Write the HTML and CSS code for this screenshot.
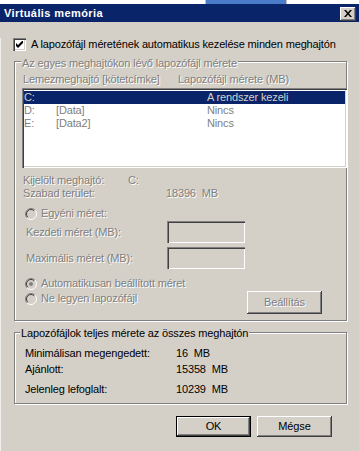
FILE: index.html
```html
<!DOCTYPE html>
<html lang="hu">
  <head>
    <meta charset="UTF-8" />
    <title>Virtuális memória</title>
    <link rel="stylesheet" href="styles.css">
  </head>
  <body>
    <div class="taskstrip"><span class="taskstrip-tab"></span></div>
    <div class="titlebar">
      <span class="title">Virtuális memória</span>
      <span class="close-btn">
        <svg width="8" height="7" viewBox="0 0 8 7">
          <path d="M0 0h2l2 2.5 2-2.5h2l-3 3.5 3 3.5h-2l-2-2.5-2 2.5h-2l3-3.5z" fill="#000" />
        </svg>
      </span>
    </div>

    <div class="dialog">
      <div class="check-row">
        <span class="checkbox">
          <svg width="7" height="7" viewBox="0 0 7 7">
            <path d="M0 2v3l2 2 5-5v-3l-5 5z" fill="#000" />
          </svg>
        </span>
        <span>A lapozófájl méretének automatikus kezelése minden meghajtón</span>
      </div>

      <div class="group group-drives">
        <div class="legend disabled">Az egyes meghajtókon lévő lapozófájl mérete</div>
        <div class="list-head disabled">
          <span class="col-drive">Lemezmeghajtó [kötetcímke]</span>
          <span>Lapozófájl mérete (MB)</span>
        </div>
        <div class="listbox">
          <div class="list-row selected">
            <span class="c1">C:</span><span class="c2"></span><span>A rendszer kezeli</span>
          </div>
          <div class="list-row">
            <span class="c1">D:</span><span class="c2">[Data]</span><span>Nincs</span>
          </div>
          <div class="list-row">
            <span class="c1">E:</span><span class="c2">[Data2]</span><span>Nincs</span>
          </div>
        </div>

        <div class="info-row disabled">
          <span class="info-label short">Kijelölt meghajtó:</span><span>C:</span>
        </div>
        <div class="info-row disabled">
          <span class="info-label long">Szabad terület:</span><span>18396&nbsp; MB</span>
        </div>

        <div class="radio-row first-radio">
          <span class="radio">
            <svg width="12" height="12" viewBox="0 0 12 12">
              <circle cx="6" cy="6" r="5" fill="#d4d0c8" />
              <path d="M2.1 9.9A5.5 5.5 0 0 1 9.9 2.1" fill="none" stroke="#808080" />
              <path d="M2.8 9.2A4.5 4.5 0 0 1 9.2 2.8" fill="none" stroke="#404040" />
              <path d="M9.9 2.1A5.5 5.5 0 0 1 2.1 9.9" fill="none" stroke="#fff" />
            </svg>
          </span>
          <span class="disabled">Egyéni méret:</span>
        </div>
        <div class="field-row field-first">
          <span class="field-label disabled">Kezdeti méret (MB):</span>
          <span class="textbox"></span>
        </div>
        <div class="field-row">
          <span class="field-label disabled">Maximális méret (MB):</span>
          <span class="textbox"></span>
        </div>
        <div class="radio-row auto-radio">
          <span class="radio">
            <svg width="12" height="12" viewBox="0 0 12 12">
              <circle cx="6" cy="6" r="5" fill="#d4d0c8" />
              <path d="M2.1 9.9A5.5 5.5 0 0 1 9.9 2.1" fill="none" stroke="#808080" />
              <path d="M2.8 9.2A4.5 4.5 0 0 1 9.2 2.8" fill="none" stroke="#404040" />
              <path d="M9.9 2.1A5.5 5.5 0 0 1 2.1 9.9" fill="none" stroke="#fff" />
              <circle cx="6" cy="6" r="2" fill="#808080" />
            </svg>
          </span>
          <span class="disabled">Automatikusan beállított méret</span>
        </div>
        <div class="radio-row none-radio">
          <span class="radio-label">
            <span class="radio">
              <svg width="12" height="12" viewBox="0 0 12 12">
                <circle cx="6" cy="6" r="5" fill="#d4d0c8" />
                <path d="M2.1 9.9A5.5 5.5 0 0 1 9.9 2.1" fill="none" stroke="#808080" />
                <path d="M2.8 9.2A4.5 4.5 0 0 1 9.2 2.8" fill="none" stroke="#404040" />
                <path d="M9.9 2.1A5.5 5.5 0 0 1 2.1 9.9" fill="none" stroke="#fff" />
              </svg>
            </span>
            <span class="disabled">Ne legyen lapozófájl</span>
          </span>
          <span class="btn btn-set disabled">Beállítás</span>
        </div>
      </div>

      <div class="group group-total">
        <div class="legend">Lapozófájlok teljes mérete az összes meghajtón</div>
        <div class="total-row row-min">
          <span class="total-label">Minimálisan megengedett:</span><span>16&nbsp; MB</span>
        </div>
        <div class="total-row row-rec">
          <span class="total-label">Ajánlott:</span><span>15358&nbsp; MB</span>
        </div>
        <div class="total-row row-cur">
          <span class="total-label">Jelenleg lefoglalt:</span><span>10239&nbsp; MB</span>
        </div>
      </div>

      <div class="actions">
        <span class="btn btn-default">OK</span>
        <span class="btn">Mégse</span>
      </div>
    </div>
  </body>
</html>
```

FILE: styles.css
```css
* {
  box-sizing: border-box;
  margin: 0;
  padding: 0;
}

body {
  width: 359px;
  height: 451px;
  overflow: hidden;
  font-family: "Liberation Sans", Arial, sans-serif;
  font-size: 11px;
  line-height: 13px;
  letter-spacing: -0.15px;
  color: #000;
  background: #d4d0c8;
}

/* piece of the window behind */
.taskstrip {
  height: 4px;
  background: #ffffff;
  display: flex;
}

.taskstrip-tab {
  width: 82px;
  margin-left: 205px;
  background: #4a7cc9;
  border-left: 1px solid #c0c0c0;
  border-right: 1px solid #c0c0c0;
}

.titlebar {
  height: 18px;
  background: #0a246a;
  display: flex;
  justify-content: space-between;
  align-items: flex-start;
  padding: 0 3px 0 4px;
}

.title {
  color: #ffffff;
  font-weight: bold;
  line-height: 18px;
  letter-spacing: 0.4px;
}

.close-btn {
  width: 16px;
  height: 14px;
  margin-top: 3px;
  background: #d4d0c8;
  display: flex;
  align-items: center;
  justify-content: center;
  padding: 0 0 1px 0;
  box-shadow: inset -1px -1px #404040, inset 1px 1px #ffffff,
    inset -2px -2px #808080;
}

.dialog {
  height: 429px;
  border-left: 1px solid #f1efeb;
  border-bottom: 1px solid #808080;
}

.disabled {
  color: #808080;
  text-shadow: 1px 1px #ffffff;
}

.check-row {
  display: flex;
  align-items: center;
  gap: 5px;
  margin: 16px 0 0 12px;
  height: 13px;
}

.checkbox {
  width: 13px;
  height: 13px;
  background: #ffffff;
  display: flex;
  align-items: center;
  justify-content: center;
  box-shadow: inset 1px 1px #808080, inset 2px 2px #404040,
    inset -1px -1px #ffffff, inset -2px -2px #d4d0c8;
}

/* etched group box */
.group {
  width: 333px;
  margin-left: 13px;
  border: 1px solid #808080;
  box-shadow: inset 1px 1px #ffffff, 1px 1px #ffffff;
  padding-left: 7px;
}

.group-drives {
  margin-top: 10px;
  padding-bottom: 6px;
}

.group-total {
  margin-top: 11px;
  padding-bottom: 7px;
}

.legend {
  width: fit-content;
  background: #d4d0c8;
  padding: 0 1px;
  margin: -5px 0 0 -1px;
}

.group-total .legend {
  margin: -6px 0 0 -2px;
}

.list-head {
  display: flex;
  margin-top: 3px;
  padding-left: 1px;
}

.col-drive {
  width: 155px;
}

.listbox {
  width: 325px;
  height: 80px;
  margin-top: 2px;
  padding: 3px 2px 2px 2px;
  background: #ffffff;
  box-shadow: inset 1px 1px #808080, inset 2px 2px #404040,
    inset -1px -1px #ffffff, inset -2px -2px #d4d0c8;
}

.list-row {
  display: flex;
  height: 13px;
  color: #808080;
}

.list-row.selected {
  background: #0a246a;
  color: #d4d0c8;
}

.c1 {
  width: 32px;
}

.c2 {
  width: 151px;
}

.info-row {
  display: flex;
  padding-left: 1px;
}

.info-row:first-of-type,
.listbox + .info-row {
  margin-top: 6px;
}

.info-label.short {
  width: 105px;
}

.info-label.long {
  width: 143px;
}

.radio-row {
  display: flex;
  align-items: center;
  gap: 4px;
  height: 13px;
  padding-left: 3px;
}

.radio {
  width: 12px;
  height: 12px;
  display: flex;
}

.first-radio {
  margin-top: 7px;
}

.auto-radio {
  margin-top: 8px;
}

.none-radio {
  margin-top: 1px;
  height: 23px;
  align-items: flex-start;
  justify-content: space-between;
}

.radio-label {
  display: flex;
  align-items: center;
  gap: 4px;
  margin-top: 1px;
}

.field-row {
  display: flex;
  align-items: center;
  padding-left: 4px;
  margin-top: 4px;
}

.field-row.field-first {
  margin-top: 1px;
}

.field-label {
  width: 141px;
}

.textbox {
  width: 78px;
  height: 22px;
  background: #d4d0c8;
  box-shadow: inset 1px 1px #808080, inset 2px 2px #404040,
    inset -1px -1px #ffffff, inset -2px -2px #d4d0c8;
}

.btn {
  width: 75px;
  height: 21px;
  display: flex;
  align-items: center;
  justify-content: center;
  background: #d4d0c8;
  box-shadow: inset -1px -1px #404040, inset 1px 1px #ffffff,
    inset -2px -2px #808080;
}

.btn-set {
  height: 23px;
  margin-right: 24px;
}

.btn-default {
  border: 1px solid #000000;
}

.total-row {
  display: flex;
  padding-left: 3px;
}

.row-min {
  margin-top: 7px;
}

.row-rec {
  margin-top: 3px;
}

.row-cur {
  margin-top: 7px;
}

.total-label {
  width: 151px;
}

.actions {
  display: flex;
  justify-content: flex-end;
  gap: 6px;
  margin-top: 12px;
  padding-right: 27px;
}
```
